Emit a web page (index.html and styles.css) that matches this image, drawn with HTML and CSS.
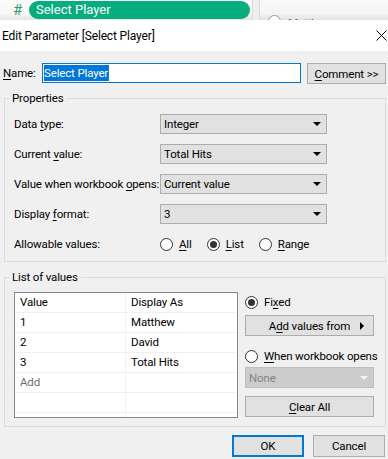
FILE: index.html
```html
<!DOCTYPE html>
<html>
<head>
<meta charset="utf-8">
<link rel="stylesheet" href="styles.css">
</head>
<body>
<div class="topbar">
  <div class="shelf">
    <span class="hash">#</span>
    <span class="pill">Select Player</span>
  </div>
  <div class="divider"></div>
  <div class="legend-card">
    <div class="lg-item"><span class="lg-radio"></span><span class="lg-text">Matthew</span></div>
  </div>
</div>
<div class="dialog">
  <div class="titlebar">
    <span class="title">Edit Parameter [Select Player]</span>
    <svg class="close" width="11" height="11" viewBox="0 0 11 11"><path d="M0.5 0.5 L10.5 10.5 M10.5 0.5 L0.5 10.5" stroke="#000" stroke-width="1" fill="none"/></svg>
  </div>
  <div class="body">
    <div class="name-row">
      <span class="name-label"><u>N</u>ame:</span>
      <div class="textbox"><span class="selected">Select Player</span></div>
      <div class="btn comment"><u>C</u>omment &gt;&gt;</div>
    </div>

    <fieldset class="group props">
      <legend>Properties</legend>
      <div class="prop-grid">
        <span class="plabel">Data <u>t</u>ype:</span>
        <div class="combo"><span>Integer</span><span class="arrow"></span></div>
        <span class="plabel">Current <u>v</u>alue:</span>
        <div class="combo"><span>Total Hits</span><span class="arrow"></span></div>
        <span class="plabel">Value when workbook <u>o</u>pens:</span>
        <div class="combo"><span>Current value</span><span class="arrow"></span></div>
        <span class="plabel">Display <u>f</u>ormat:</span>
        <div class="combo"><span>3</span><span class="arrow"></span></div>
        <span class="plabel">Allowable values:</span>
        <div class="radios">
          <span class="ropt"><span class="radio"></span><span><u>A</u>ll</span></span>
          <span class="ropt"><span class="radio on"></span><span><u>L</u>ist</span></span>
          <span class="ropt"><span class="radio"></span><span><u>R</u>ange</span></span>
        </div>
      </div>
    </fieldset>

    <fieldset class="group values">
      <legend>List of values</legend>
      <div class="values-inner">
        <div class="table">
          <div class="trow"><span class="c1">Value</span><span class="c2">Display As</span></div>
          <div class="trow"><span class="c1">1</span><span class="c2">Matthew</span></div>
          <div class="trow"><span class="c1">2</span><span class="c2">David</span></div>
          <div class="trow"><span class="c1">3</span><span class="c2">Total Hits</span></div>
          <div class="trow"><span class="c1 muted">Add</span><span class="c2"></span></div>
          <div class="trow"><span class="c1"></span><span class="c2"></span></div>
          <div class="trow"><span class="c1"></span><span class="c2"></span></div>
        </div>
        <div class="side">
          <div class="ropt side-radio first"><span class="radio on"></span><span>Fi<u>x</u>ed</span></div>
          <div class="btn addvals"><span>A<u>d</u>d values from</span><span class="rarrow"></span></div>
          <div class="ropt side-radio second"><span class="radio"></span><span><u>W</u>hen workbook opens</span></div>
          <div class="combo disabled"><span>None</span><span class="arrow"></span></div>
          <div class="btn clear"><u>C</u>lear All</div>
        </div>
      </div>
    </fieldset>

    <div class="footer">
      <div class="btn ok">OK</div>
      <div class="btn cancel">Cancel</div>
    </div>
  </div>
</div>
</body>
</html>
```

FILE: styles.css
```css
* { box-sizing: border-box; }
html, body { margin: 0; padding: 0; }
body {
  width: 388px;
  height: 459px;
  overflow: hidden;
  background: #f0f0f0;
  color: #000;
  font-family: "Roboto", "Segoe UI", sans-serif;
  font-size: 11.5px;
  letter-spacing: -0.15px;
}
u { text-decoration-thickness: 1px; text-underline-offset: 2px; }

/* top application strip */
.topbar {
  height: 20px;
  overflow: hidden;
  display: flex;
  background: linear-gradient(#fbfbfb 0, #f7f7f7 65%, #e4e4e4 100%);
}
.shelf {
  width: 252px;
  display: flex;
  align-items: center;
  padding: 1px 2px 1px 13px;
  gap: 7px;
}
.hash {
  width: 9px;
  color: #2f9e6e;
  font-size: 15px;
  line-height: 18px;
  letter-spacing: 0;
}
.pill {
  flex: 1;
  height: 18px;
  border-radius: 9px;
  background: #06ad7e;
  color: #fff;
  font-size: 13px;
  letter-spacing: 0;
  line-height: 18px;
  padding-left: 7px;
}
.divider {
  width: 8px;
  border-left: 1px solid #dadada;
  border-right: 1px solid #dadada;
  background: #efefef;
}
.legend-card {
  flex: 1;
  padding-left: 8px;
  background: linear-gradient(#f9f9f9 0, #f5f5f5 65%, #e3e3e3 100%);
}
.lg-item {
  display: flex;
  align-items: flex-start;
  gap: 7px;
  margin-top: 15px;
  color: #555;
}
.lg-text { line-height: 14px; margin-top: 1px; }
.lg-radio {
  width: 13px;
  height: 13px;
  border: 1px solid #999;
  border-radius: 50%;
  background: #fff;
}

/* dialog */
.titlebar {
  height: 31px;
  background: #fff;
  display: flex;
  align-items: center;
  justify-content: space-between;
  padding: 0 1px 0 2px;
}
.title { font-size: 12px; letter-spacing: -0.15px; }
.close { display: block; }

.body {
  padding: 12px 2px 0 4px;
}

.name-row {
  display: flex;
  align-items: flex-start;
  height: 21px;
}
.name-label {
  width: 38px;
  margin-left: -1px;
  line-height: 21px;
}
.textbox {
  width: 259px;
  height: 20px;
  margin-left: 1px;
  background: #fff;
  border: 1px solid #0078d7;
  padding: 1px 0 0 1px;
  line-height: 16px;
}
.selected {
  background: #0078d7;
  color: #fff;
  display: inline-block;
  line-height: 16px;
  padding: 0 1px 0 0;
}
.btn {
  height: 21px;
  background: #e1e1e1;
  border: 1px solid #adadad;
  display: flex;
  align-items: center;
  justify-content: center;
  line-height: 16px;
}
.comment {
  width: 79px;
  margin-left: 6px;
}

/* group boxes */
.group {
  margin: 0;
  border: 1px solid #dcdcdc;
  min-width: 0;
}
.group legend {
  padding: 0 3px;
  margin-left: -5px;
  line-height: 16px;
}
.props {
  margin-top: 6px;
  padding: 8px 8px 7px 9px;
}
.prop-grid {
  display: grid;
  grid-template-columns: 146px 167px;
  grid-auto-rows: 20px;
  row-gap: 10px;
  align-items: center;
}
.plabel { line-height: 20px; white-space: nowrap; }
.combo {
  height: 20px;
  background: #e1e1e1;
  border: 1px solid #adadad;
  display: flex;
  align-items: center;
  justify-content: space-between;
  padding: 0 5px 0 3px;
}
.arrow {
  width: 0;
  height: 0;
  border-left: 4px solid transparent;
  border-right: 4px solid transparent;
  border-top: 4px solid #000;
}
.radios {
  display: flex;
  gap: 15px;
  align-items: center;
}
.ropt {
  display: flex;
  align-items: center;
  gap: 6px;
  white-space: nowrap;
}
.radio {
  width: 13px;
  height: 13px;
  border: 1px solid #333;
  border-radius: 50%;
  background: #fff;
  display: flex;
  align-items: center;
  justify-content: center;
  flex: none;
}
.radio.on::after {
  content: "";
  width: 7px;
  height: 7px;
  border-radius: 50%;
  background: #333;
}

.values {
  margin-top: 7px;
  padding: 7px 10px 8px 9px;
}
.values-inner {
  display: flex;
  gap: 7px;
  align-items: flex-start;
}
.table {
  width: 224px;
  height: 126px;
  overflow: hidden;
  background: #fff;
  border: 1px solid #828790;
}
.trow {
  display: flex;
  height: 20px;
  border-bottom: 1px solid #f0f0f0;
}
.c1 {
  width: 111px;
  border-right: 1px solid #f0f0f0;
  padding-left: 5px;
  line-height: 19px;
}
.c2 {
  flex: 1;
  padding-left: 5px;
  line-height: 19px;
}
.muted { color: #6d6d6d; }

.side {
  width: 129px;
  display: flex;
  flex-direction: column;
}
.side-radio { height: 18px; }
.side-radio.first { margin-top: 1px; }
.addvals {
  margin-top: 4px;
  position: relative;
}
.rarrow {
  position: absolute;
  right: 9px;
  top: 6px;
  width: 0;
  height: 0;
  border-top: 4px solid transparent;
  border-bottom: 4px solid transparent;
  border-left: 4px solid #000;
}
.side-radio.second { margin-top: 11px; }
.combo.disabled {
  margin-top: 2px;
  height: 21px;
  background: #cccccc;
  border-color: #bfbfbf;
  color: #838383;
}
.combo.disabled .arrow { border-top-color: #f2f2f2; }
.clear { margin-top: 8px; }

.footer {
  display: flex;
  justify-content: flex-end;
  gap: 9px;
  padding: 8px 1px 0 0;
}
.ok, .cancel {
  width: 72px;
  height: 22px;
}
.ok { border: 2px solid #0078d7; }
```
